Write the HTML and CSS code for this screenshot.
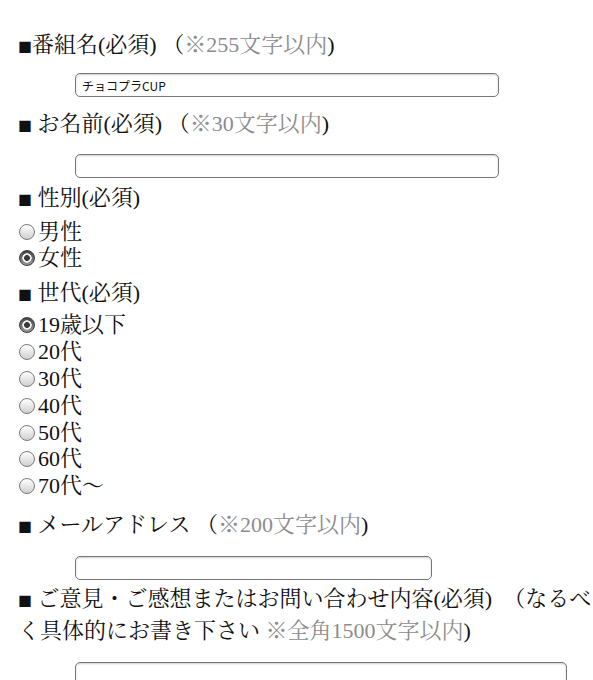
FILE: index.html
```html
<!DOCTYPE html>
<html lang="ja">
<head>
<meta charset="utf-8">
<title>お問い合わせ</title>
<link rel="stylesheet" href="styles.css">
</head>
<body>
<form class="form">
  <p class="label lbl-first"><span class="sq">■</span>番組名(必須) （<span class="note">※255文字以内</span>)</p>
  <input class="field field-wide in-first" type="text" value="チョコプラCUP">

  <p class="label lbl-name"><span class="sq">■</span> お名前(必須) （<span class="note">※30文字以内</span>)</p>
  <input class="field field-wide in-name" type="text">

  <p class="label lbl-sex"><span class="sq">■</span> 性別(必須)</p>
  <div class="radios radios-sex">
    <label class="opt"><span class="radio"></span>男性</label>
    <label class="opt"><span class="radio radio-on"></span>女性</label>
  </div>

  <p class="label lbl-age"><span class="sq">■</span> 世代(必須)</p>
  <div class="radios radios-age">
    <label class="opt"><span class="radio radio-on"></span>19歳以下</label>
    <label class="opt"><span class="radio"></span>20代</label>
    <label class="opt"><span class="radio"></span>30代</label>
    <label class="opt"><span class="radio"></span>40代</label>
    <label class="opt"><span class="radio"></span>50代</label>
    <label class="opt"><span class="radio"></span>60代</label>
    <label class="opt"><span class="radio"></span>70代～</label>
  </div>

  <p class="label lbl-mail"><span class="sq">■</span> メールアドレス （<span class="note">※200文字以内</span>)</p>
  <input class="field field-mail in-mail" type="text">

  <p class="label label-wrap lbl-msg"><span class="sq">■</span> ご意見・ご感想またはお問い合わせ内容(必須)　（なるべく具体的にお書き下さい <span class="note">※全角1500文字以内</span>)</p>
  <textarea class="area"></textarea>
</form>
</body>
</html>
```
FILE: styles.css
```css
html, body {
  margin: 0;
  padding: 0;
  background: #fff;
  overflow-x: hidden;
}

body {
  font-family: "Liberation Serif", "Noto Serif CJK JP", "Noto Sans CJK JP", serif;
  color: #111;
}

.form {
  width: 579px;
  padding: 32px 0 40px 18px;
}

.label {
  margin: 0;
  height: 26px;
  font-size: 22px;
  line-height: 26px;
}

.label-wrap {
  height: 64px;
  line-height: 32px;
}

.sq {
  font-family: "Noto Sans CJK JP", sans-serif;
  font-size: 14px;
  line-height: 1;
}

.note {
  color: #8c8c8c;
}

.field {
  display: block;
  box-sizing: border-box;
  height: 24px;
  margin-left: 57px;
  padding: 0 6px;
  border: 1px solid #777;
  border-radius: 5px;
  box-shadow: inset 0 1px 2px rgba(0, 0, 0, 0.2);
  background: #fff;
  font-family: "Noto Sans CJK JP", sans-serif;
  font-size: 12px;
  color: #111;
  outline: none;
}

.field-wide { width: 424px; }
.field-mail { width: 357px; }

.in-first { margin-top: 15px; }
.lbl-name { margin-top: 14px; }
.in-name { margin-top: 17px; }
.lbl-sex { margin-top: 7px; }
.radios-sex { margin-top: 8px; }
.radios-sex .opt { height: 26px; }
.lbl-age { margin-top: 9px; }
.radios-age { margin-top: 6px; }
.radios-age .opt { height: 26.8px; }
.lbl-mail { margin-top: 12px; }
.in-mail { margin-top: 18px; }
.lbl-msg { margin-top: 3px; }

.radios {
  display: flex;
  flex-direction: column;
  font-size: 22px;
}

.opt {
  display: flex;
  align-items: center;
  gap: 3px;
  line-height: 1;
}

.radio {
  display: block;
  box-sizing: border-box;
  width: 16px;
  height: 16px;
  margin-left: 1px;
  border: 1px solid #7a7a7a;
  border-radius: 50%;
  background: linear-gradient(#ffffff, #cfcfcf);
  flex: none;
}

.radio-on {
  border-color: #3a3a3a;
  background:
    radial-gradient(circle, #3a3a3a 0 2.6px, #f0f0f0 3.2px 4.4px, rgba(0,0,0,0) 5px),
    linear-gradient(#444, #999);
}

.area {
  display: block;
  box-sizing: border-box;
  width: 492px;
  height: 100px;
  margin: 15px 0 0 57px;
  border: 1px solid #777;
  border-radius: 5px;
  box-shadow: inset 0 1px 2px rgba(0, 0, 0, 0.2);
  resize: none;
}
```
